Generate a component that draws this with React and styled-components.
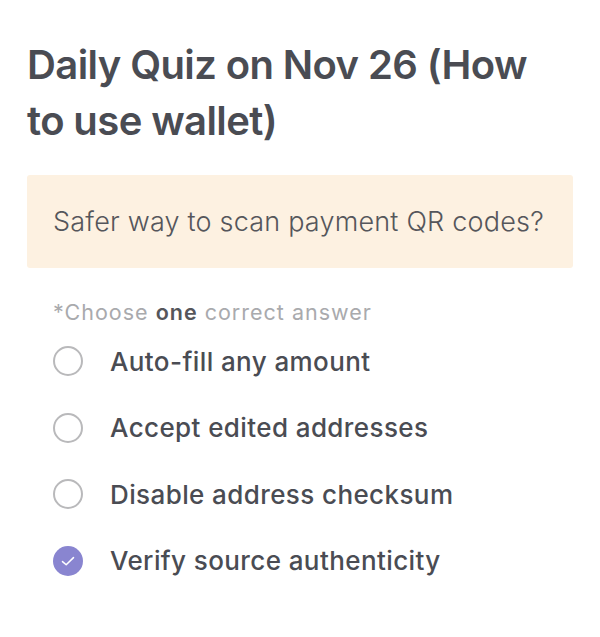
import React from 'react'
import { styled, createGlobalStyle } from 'styled-components'

const GlobalStyle = createGlobalStyle`
  html, body {
    margin: 0;
    background: #fff;
  }
  body {
    font-family: Inter, 'Noto Sans', sans-serif;
  }
`

const Page = styled.div`
  padding: 37px 27px 40px 27px;
  display: flex;
  flex-direction: column;
`

const Title = styled.h1`
  margin: 0;
  font-size: 40px;
  line-height: 56px;
  font-weight: 600;
  color: #4a4c53;
  letter-spacing: -0.6px;
`

const QuestionBox = styled.div`
  margin-top: 26px;
  background: #fdf1e1;
  border-radius: 3px;
  height: 93px;
  display: flex;
  align-items: center;
  padding: 0 26px;
  font-size: 27px;
  font-weight: 300;
  letter-spacing: 0.2px;
  color: #55565b;
`

const Hint = styled.p`
  margin: 31px 0 0 26px;
  font-size: 21.5px;
  line-height: 26px;
  letter-spacing: 1px;
  color: #a9aaad;
  b {
    font-weight: 600;
    color: #55565b;
  }
`

const Options = styled.ul`
  list-style: none;
  margin: 19px 0 0 0;
  padding: 0 0 0 26px;
  display: flex;
  flex-direction: column;
  gap: 32.5px;
`

const Option = styled.li`
  display: flex;
  align-items: center;
  gap: 27px;
  height: 34px;
  font-size: 26px;
  font-weight: 500;
  letter-spacing: 0.4px;
  color: #4a4c53;
`

const Radio = styled.span`
  width: 30px;
  height: 30px;
  box-sizing: border-box;
  border-radius: 50%;
  border: ${p => (p.$checked ? 'none' : '2px solid #b9b9bb')};
  background: ${p => (p.$checked ? '#8985d0' : '#fff')};
  display: flex;
  align-items: center;
  justify-content: center;
  flex-shrink: 0;
`

const answers = [
  'Auto-fill any amount',
  'Accept edited addresses',
  'Disable address checksum',
  'Verify source authenticity',
]

const App = () => {
  return (
    <>
      <GlobalStyle />
      <Page>
        <Title>Daily Quiz on Nov 26 (How to use wallet)</Title>
        <QuestionBox>Safer way to scan payment QR codes?</QuestionBox>
        <Hint>*Choose <b>one</b> correct answer</Hint>
        <Options>
          {answers.map((a, i) => (
            <Option key={a}>
              <Radio $checked={i === 3}>
                {i === 3 && (
                  <svg width="16" height="16" viewBox="0 0 16 16">
                    <path d="M2.5 8.6 L6.2 11.8 L13.5 4.6" fill="none" stroke="#fff" strokeWidth="1.5" strokeLinecap="round" strokeLinejoin="round" />
                  </svg>
                )}
              </Radio>
              {a}
            </Option>
          ))}
        </Options>
      </Page>
    </>
  )
}

export default App
